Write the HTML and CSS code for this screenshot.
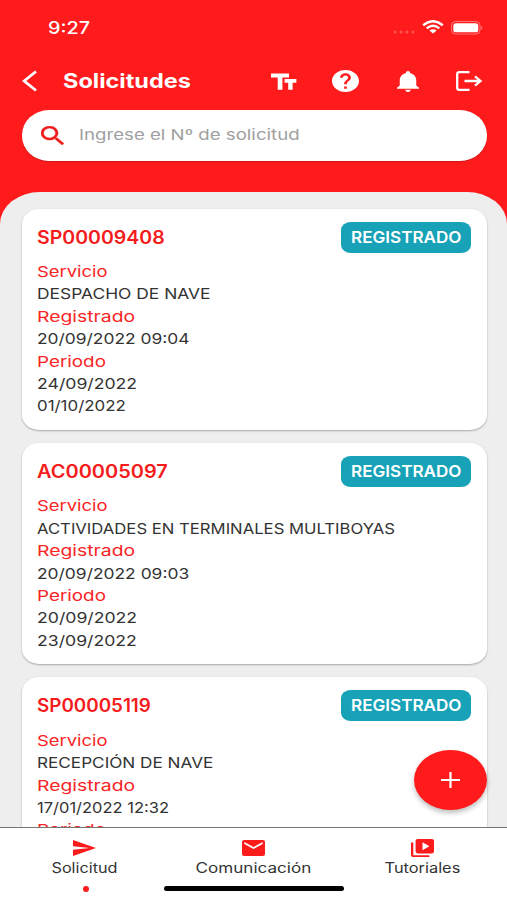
FILE: index.html
```
<!DOCTYPE html>
<html lang="es">
	<head>
	<meta charset="utf-8"/>
		<title>Solicitudes</title>
		<link rel="stylesheet" href="styles.css">
	</head>
	<body>
		<div class="app">
		<header>
			<div class="status">
				<span class="time wide" data-w="42">9:27</span>
				<svg class="dots" width="24" height="4"><g fill="#fff" opacity=".25"><circle cx="3" cy="2" r="1.5"/><circle cx="9" cy="2" r="1.5"/><circle cx="15" cy="2" r="1.5"/><circle cx="21" cy="2" r="1.5"/></g></svg>
				<svg class="wifi" width="22" height="14" viewBox="0 0 22 14"><g fill="none" stroke="#fff" stroke-width="2.4"><path d="M1.2 5.2Q11-2.8 20.8 5.2"/><path d="M4.7 8.4Q11 3.2 17.3 8.4"/></g><path fill="#fff" d="M7.4 10.6Q11 7.8 14.6 10.6L11 13.6z"/></svg>
				<svg class="battery" width="33" height="14" viewBox="0 0 33 14"><rect x=".5" y=".5" width="28.5" height="12.6" rx="4" fill="none" stroke="#fff" opacity=".4"/><rect x="2.3" y="2.3" width="25" height="9" rx="2.6" fill="#fff"/><path fill="#fff" opacity=".5" d="M30.3 4.8q2 2 0 4z"/></svg>
			</div>
			<div class="bar">
				<svg class="back" width="16" height="22" viewBox="0 0 16 22"><path fill="none" stroke="#fff" stroke-width="2.8" d="M14 1.5L2.200 11l11.800 9.500"/></svg>
				<h1><span class="wide" data-w="128">Solicitudes</span></h1>
				<svg class="size" width="26" height="17" viewBox="0 0 26 17"><path fill="#fff" d="M0 .4h18v4.100h-6.600v12.200H6.700V4.500H0zM13.600 6h11.800v3.700h-3.800v7h-4.400v-7h-3.600z"/></svg>
				<svg class="help" width="27" height="22" viewBox="2 2 20 20" preserveAspectRatio="none"><path fill="#fff" d="M12 2C6.480 2 2 6.480 2 12s4.480 10 10 10 10-4.480 10-10S17.520 2 12 2zm1 17h-2v-2h2v2zm2.070-7.750l-.9.920C13.450 12.900 13 13.500 13 15h-2v-.5c0-1.100.450-2.100 1.170-2.830l1.240-1.260c.370-.360.590-.860.590-1.410 0-1.100-.9-2-2-2s-2 .9-2 2H8c0-2.210 1.790-4 4-4s4 1.790 4 4c0 .880-.360 1.680-.930 2.250z"/></svg>
				<svg class="bell" width="22" height="21" viewBox="4 2.500 16 19.500" preserveAspectRatio="none"><path fill="#fff" d="M12 22c1.100 0 2-.9 2-2h-4c0 1.100.9 2 2 2zm6-6v-5c0-3.070-1.630-5.640-4.500-6.320V4c0-.830-.670-1.500-1.500-1.500s-1.500.670-1.500 1.500v.680C7.640 5.360 6 7.920 6 11v5l-2 2v1h16v-1l-2-2z"/></svg>
				<svg class="exit" width="27" height="20" viewBox="0 0 27 20"><g fill="none" stroke="#fff" stroke-width="2.300"><path d="M13.500 1.200H3.200Q1.200 1.200 1.200 3v14q0 1.800 2 1.800h10.300" /><path d="M8.500 10h16M19 5.300l5.500 4.700-5.500 4.700"/></g></svg>
			</div>
			<div class="search">
				<svg width="23" height="19" viewBox="3 3 17.490 17.490" preserveAspectRatio="none"><path fill="#ef1c1c" stroke="#ef1c1c" stroke-width=".3" d="M15.500 14h-.790l-.280-.270C15.410 12.590 16 11.110 16 9.500 16 5.910 13.090 3 9.500 3S3 5.910 3 9.500 5.910 16 9.500 16c1.610 0 3.090-.590 4.230-1.570l.270.280v.790l5 4.990L20.490 19l-4.990-5zm-6 0C7.010 14 5 11.990 5 9.500S7.010 5 9.500 5 14 7.010 14 9.500 11.990 14 9.500 14z"/></svg>
				<span class="wide" data-w="220">Ingrese el Nº de solicitud</span>
			</div>
		</header>

		<main>
			<div class="card">
				<div class="top">
					<h2><span class="wide" data-w="128">SP00009408</span></h2>
					<div class="badge"><span class="wide" data-w="110">REGISTRADO</span></div>
				</div>
				<p class="label"><span class="wide" data-w="71">Servicio</span></p>
				<p><span class="wide" data-w="174">DESPACHO DE NAVE</span></p>
				<p class="label"><span class="wide" data-w="98">Registrado</span></p>
				<p><span class="wide" data-w="153">20/09/2022 09:04</span></p>
				<p class="label"><span class="wide" data-w="69">Periodo</span></p>
				<p><span class="wide" data-w="100">24/09/2022</span></p>
				<p><span class="wide" data-w="89">01/10/2022</span></p>
			</div>
			<div class="card">
				<div class="top">
					<h2><span class="wide" data-w="131">AC00005097</span></h2>
					<div class="badge"><span class="wide" data-w="110">REGISTRADO</span></div>
				</div>
				<p class="label"><span class="wide" data-w="71">Servicio</span></p>
				<p><span class="wide" data-w="358">ACTIVIDADES EN TERMINALES MULTIBOYAS</span></p>
				<p class="label"><span class="wide" data-w="98">Registrado</span></p>
				<p><span class="wide" data-w="152">20/09/2022 09:03</span></p>
				<p class="label"><span class="wide" data-w="69">Periodo</span></p>
				<p><span class="wide" data-w="100">20/09/2022</span></p>
				<p><span class="wide" data-w="100">23/09/2022</span></p>
			</div>
			<div class="card">
				<div class="top">
					<h2><span class="wide" data-w="114">SP00005119</span></h2>
					<div class="badge"><span class="wide" data-w="110">REGISTRADO</span></div>
				</div>
				<p class="label"><span class="wide" data-w="71">Servicio</span></p>
				<p><span class="wide" data-w="176">RECEPCIÓN DE NAVE</span></p>
				<p class="label"><span class="wide" data-w="98">Registrado</span></p>
				<p><span class="wide" data-w="132">17/01/2022 12:32</span></p>
				<p class="label"><span class="wide" data-w="69">Periodo</span></p>
			</div>
		</main>

		<div class="add"><svg width="19" height="16"><path stroke="#fff" stroke-width="2.200" d="M0 8h19M9.500 0v16"/></svg></div>

		<nav>
			<div class="tab">
				<svg width="23" height="16" viewBox="2 3 21 18" preserveAspectRatio="none"><path fill="#fb1b1b" d="M2.010 21L23 12 2.010 3 2 10l15 2-15 2z"/></svg>
				<span class="wide" data-w="66">Solicitud</span>
				<i class="dot"></i>
			</div>
			<div class="tab">
				<svg width="23" height="15" viewBox="2 4 20 16" preserveAspectRatio="none"><path fill="#fb1b1b" d="M20 4H4c-1.100 0-1.990.9-1.990 2L2 18c0 1.100.9 2 2 2h16c1.100 0 2-.9 2-2V6c0-1.100-.9-2-2-2zm0 4l-8 5-8-5V6l8 5 8-5v2z"/></svg>
				<span class="wide" data-w="116">Comunicación</span>
				<i class="home"></i>
			</div>
			<div class="tab">
				<svg width="23" height="18" viewBox="2 2 20 20" preserveAspectRatio="none"><path fill="#fb1b1b" d="M4 6H2v14c0 1.100.9 2 2 2h14v-2H4V6zm16-4H8c-1.100 0-2 .9-2 2v12c0 1.100.9 2 2 2h12c1.100 0 2-.9 2-2V4c0-1.100-.9-2-2-2zm-8 12.500v-9l6 4.500-6 4.500z"/></svg>
				<span class="wide" data-w="76">Tutoriales</span>
			</div>
		</nav>
		</div>
		<script src="wide.js"></script>
	</body>
</html>
```
FILE: styles.css
```
*{box-sizing: border-box;}
body{
	margin: 0;
	font: 15px/22.4px Inter, "Open Sans", sans-serif;
	color: #333;
}
svg{display: block;flex: none;}
h1,h2,p{margin: 0;}
.app{
	position: relative;
	display: flex;
	flex-direction: column;
	width: 507px;
	height: 900px;
	overflow: hidden;
	background: #ff1b1b;
}
.wide{
	display: inline-block;
	white-space: nowrap;
	transform-origin: 0 50%;
}
header{
	flex: none;
	height: 191.5px;
	padding: 16.5px 20.5px 0 22px;
}
.status{
	display: flex;
	height: 24px;
	padding: 0 3px 0 25.5px;
	color: #fff;
}
.time{
	font-size: 17px;
	font-weight: 500;
}
.dots{margin: 13.5px 0 0 auto;}
.wifi{margin: 3.5px 0 0 6px;}
.battery{margin: 4px 0 0 7px;}
.bar{
	display: flex;
	align-items: center;
	height: 42px;
	margin-top: 19.5px;
	color: #fff;
}
h1{
	width: 208px;
	margin-left: 24.5px;
	font-size: 20px;
	font-weight: 700;
}
.help{margin-left: 35px;}
.bell{margin-left: 38px;}
.exit{margin-left: 37.5px;}
.search{
	display: flex;
	align-items: center;
	height: 51px;
	margin-top: 8px;
	padding-left: 19px;
	border-radius: 27px / 25px;
	background: #fff;
	color: #a0a0a0;
	box-shadow: 0 1px 1px rgba(0,0,0,.2);
}
.search span{margin-left: 14.5px;}
main{
	flex: 1;
	min-height: 0;
	overflow: hidden;
	padding: 17px 20.5px 0 21.5px;
	border-radius: 40px 40px 0 0 / 32px 32px 0 0;
	background: #eee;
}
.card{
	height: 221.4px;
	margin-bottom: 13px;
	padding: 13px 16px 0 15.5px;
	border-radius: 17px / 15px;
	background: #fff;
	box-shadow: 0 1px 2px rgba(0,0,0,.3);
}
.top{
	display: flex;
	justify-content: space-between;
	height: 39.5px;
}
h2{
	font-size: 18px;
	font-weight: 600;
	line-height: 31px;
	color: #f41c1c;
}
.badge{
	width: 130px;
	height: 31px;
	padding-left: 10px;
	border-radius: 10px / 8px;
	background: #17a2b8;
	color: #fff;
	font-size: 16px;
	font-weight: 600;
	line-height: 30px;
}
.label{color: #f92424;}
.add{
	position: absolute;
	left: 413.5px;
	top: 750px;
	display: flex;
	align-items: center;
	justify-content: center;
	width: 73px;
	height: 60px;
	border-radius: 50%;
	background: #ff1b1b;
	box-shadow: 0 3px 5px rgba(0,0,0,.25);
}
nav{
	display: grid;
	grid-template-columns: repeat(3, minmax(0, 1fr));
	flex: none;
	height: 73px;
	border-top: 1px solid #777;
	background: #fff;
	font-size: 14px;
}
.tab{
	display: flex;
	flex-direction: column;
	align-items: center;
}
.tab svg{
	height: 18px;
	margin-top: 11px;
	padding: 1px 0;
}
.tab:last-child svg{padding: 0;}
.tab .wide{
	line-height: 22px;
	transform-origin: 50% 50%;
}
.dot{
	width: 6px;
	height: 6px;
	margin: 7px 0 0 2px;
	border-radius: 50%;
	background: #fb1b1b;
}
.home{
	flex: none;
	width: 180px;
	height: 5px;
	margin-top: 7px;
	border-radius: 3px;
	background: #000;
}
```
FILE: wide.js
```
(function(){
	// stretch each label to its own width
	var list = document.querySelectorAll('.wide');
	for(var i = 0; i < list.length; i++){
		var el = list[i];
		el.style.transform = 'scaleX(' + el.dataset.w / el.offsetWidth + ')';
	}
})();
```
